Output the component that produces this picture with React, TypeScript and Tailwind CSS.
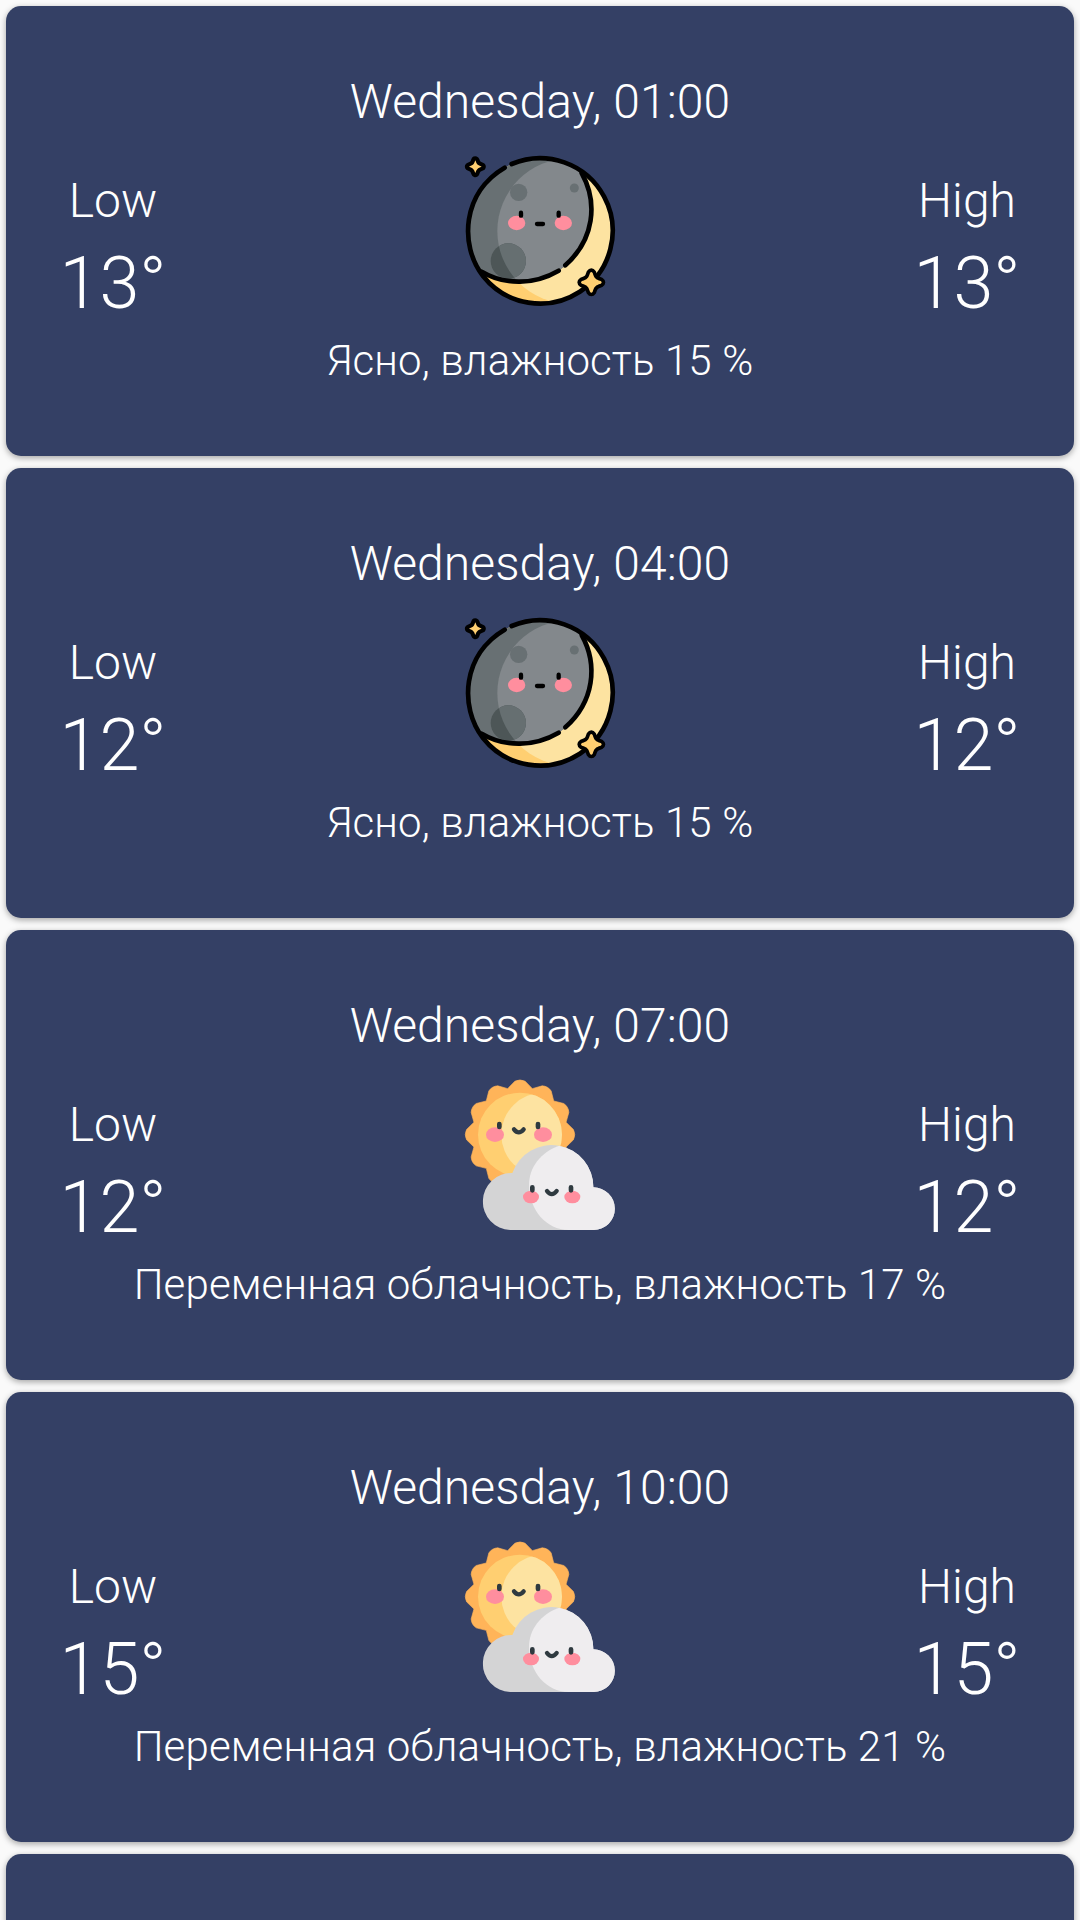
type IconName = "moon" | "cloud";

interface Forecast {
  time: string;
  low: string;
  high: string;
  icon: IconName;
  text: string;
}

const forecasts: Forecast[] = [
  { time: "Wednesday, 01:00", low: "13°", high: "13°", icon: "moon", text: "Ясно, влажность 15 %" },
  { time: "Wednesday, 04:00", low: "12°", high: "12°", icon: "moon", text: "Ясно, влажность 15 %" },
  { time: "Wednesday, 07:00", low: "12°", high: "12°", icon: "cloud", text: "Переменная облачность, влажность 17 %" },
  { time: "Wednesday, 10:00", low: "15°", high: "15°", icon: "cloud", text: "Переменная облачность, влажность 21 %" },
];

function MoonIcon() {
  return (
    <svg viewBox="30 33 450 450" className="mt-px h-[150px] w-[150px] overflow-visible">
      <defs>
        <clipPath id="moon-disc">
          <circle cx="255" cy="258" r="218" />
        </clipPath>
        <clipPath id="moon-shade">
          <circle cx="195" cy="197" r="214" />
        </clipPath>
        <clipPath id="moon-crater">
          <circle cx="160" cy="348" r="53" />
        </clipPath>
      </defs>
      <g clipPath="url(#moon-disc)">
        <circle cx="255" cy="258" r="218" fill="#ffcf71" />
        <circle cx="345" cy="258" r="218" fill="#fde3a1" />
        <g clipPath="url(#moon-shade)">
          <circle cx="255" cy="258" r="218" fill="#687073" />
          <circle cx="345" cy="258" r="218" fill="#83888c" />
        </g>
        <circle cx="160" cy="348" r="53" fill="#4d5657" />
        <circle cx="345" cy="258" r="218" fill="#666f71" clipPath="url(#moon-crater)" />
        <circle cx="191" cy="142" r="26" fill="#687073" />
        <circle cx="358" cy="129" r="13.500" fill="#687073" />
      </g>
      <g fill="none" stroke="#000" strokeWidth="14" strokeLinecap="round">
        <path d="M170 57A218 218 0 1 1 84 393C12 300 22 142 149 68" />
        <path d="M380 84C430 174 417 284 331 361" />
        <path d="M311 377C239 419 151 422 80 380" />
        <path d="M246 237H264" strokeWidth="13" />
      </g>
      <ellipse cx="185" cy="234" rx="26" ry="21.500" fill="#ff8e9e" />
      <ellipse cx="325" cy="234" rx="26" ry="21.500" fill="#ff8e9e" />
      <path d="M198 203V212M311 203V212" stroke="#000" strokeWidth="13" strokeLinecap="round" />
      <path
        d="M61 46C65 58 68 61 80 65C68 69 65 72 61 84C57 72 54 69 42 65C54 61 57 58 61 46Z"
        fill="#ffcf71"
        stroke="#000"
        strokeWidth="25"
        strokeLinejoin="round"
        paintOrder="stroke"
      />
      <path
        d="M405 384Q409 378 413 384C418 400 421 403 437 408Q443 412 437 416C421 421 418 424 413 440Q409 446 405 440C400 424 397 421 381 416Q375 412 381 408C397 403 400 400 405 384Z"
        fill="#ffcf71"
        stroke="#000"
        strokeWidth="22"
        strokeLinejoin="round"
        paintOrder="stroke"
      />
    </svg>
  );
}

const polar = (radius: number, degrees: number) => {
  const a = (degrees * Math.PI) / 180;
  return `${(195 + radius * Math.cos(a)).toFixed(1)} ${(194 + radius * Math.sin(a)).toFixed(1)}`;
};

const sunRays =
  "M" +
  Array.from({ length: 12 }, (_, i) => {
    const peak = i * 30;
    return `${polar(143, peak - 15)}L${polar(161, peak - 5.5)}Q${polar(168, peak)} ${polar(161, peak + 5.5)}`;
  }).join("L") +
  "Z";

function CloudIcon() {
  return (
    <svg viewBox="30 30 450 450" className="mt-px h-[150px] w-[150px] overflow-visible">
      <defs>
        <clipPath id="sun-face">
          <circle cx="195" cy="194" r="126" />
        </clipPath>
        <clipPath id="cloud-body">
          <path d="M166 480A85 85 0 0 1 172 309A125 125 0 0 1 415 352A64 64 0 1 1 416 480Z" />
        </clipPath>
      </defs>
      <path d={sunRays} fill="#ffb459" stroke="#ffb459" strokeWidth="2" strokeLinejoin="round" />
      <circle cx="195" cy="194" r="126" fill="#ffcf71" />
      <circle cx="265" cy="194" r="126" fill="#fde3a1" clipPath="url(#sun-face)" />
      <g fill="#ff8e9e">
        <ellipse cx="120" cy="194" rx="27" ry="22" />
        <ellipse cx="264" cy="194" rx="27" ry="22" />
      </g>
      <g fill="none" stroke="#2f3a40" strokeWidth="14" strokeLinecap="round">
        <path d="M133 162V171M249 162V171" />
        <path d="M177 178Q191 196 206 178" strokeWidth="13" />
      </g>
      <g clipPath="url(#cloud-body)">
        <path d="M30 200H480V480H30Z" fill="#d4d4d5" />
        <path d="M318 226C255 245 222 295 222 345C222 420 275 480 340 480H480V200Z" fill="#efedef" />
      </g>
      <g fill="#ff8e9e">
        <ellipse cx="228" cy="381" rx="24" ry="19" />
        <ellipse cx="352" cy="381" rx="24" ry="19" />
      </g>
      <g fill="none" stroke="#2f3a40" strokeWidth="14" strokeLinecap="round">
        <path d="M232 352V361M348 352V361" />
        <path d="M276 363Q290 382 305 363" strokeWidth="13" />
      </g>
    </svg>
  );
}

function Temperature({ label, value }: { label: string; value: string }) {
  return (
    <div className="flex w-[110px] flex-col items-center gap-[13px] pt-[18px]">
      <div className="text-5xl leading-[56px]">{label}</div>
      <div className="text-7xl leading-[84px]">{value}</div>
    </div>
  );
}

const cardClass = "shrink-0 h-[450px] rounded-[15px] bg-[#344065] shadow-[0_2px_6px_rgba(0,0,0,0.35)]";

function ForecastCard({ item }: { item: Forecast }) {
  return (
    <section className={`${cardClass} flex flex-col pt-[68px]`}>
      <div className="text-center text-5xl leading-[56px] tracking-[0.08px]">{item.time}</div>
      <div className="mt-[25px] flex h-[170px] items-start justify-between px-[52px]">
        <Temperature label="Low" value={item.low} />
        {item.icon === "moon" ? <MoonIcon /> : <CloudIcon />}
        <Temperature label="High" value={item.high} />
      </div>
      <div className="mt-3 text-center text-[42px] leading-[48px] tracking-[0.13px]">{item.text}</div>
    </section>
  );
}

export default function App() {
  return (
    <main className="flex h-[1920px] flex-col gap-3 overflow-hidden bg-[#fafafa] p-1.5 font-['Roboto',sans-serif] font-light text-white">
      {forecasts.map((item) => (
        <ForecastCard key={item.time} item={item} />
      ))}
      <section className={cardClass} />
    </main>
  );
}
